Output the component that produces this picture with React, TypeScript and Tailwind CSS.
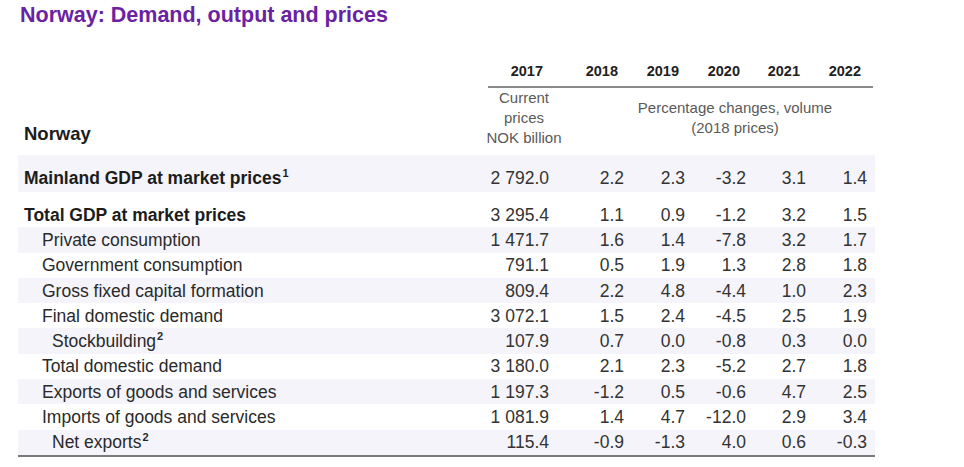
const rows: {
  label: string;
  sup?: string;
  indent: "none" | "one" | "two";
  bold?: boolean;
  shaded?: boolean;
  values: string[];
}[] = [
  { label: "Total GDP at market prices", indent: "none", bold: true, values: ["3 295.4", "1.1", "0.9", "-1.2", "3.2", "1.5"] },
  { label: "Private consumption", indent: "one", shaded: true, values: ["1 471.7", "1.6", "1.4", "-7.8", "3.2", "1.7"] },
  { label: "Government consumption", indent: "one", values: ["791.1", "0.5", "1.9", "1.3", "2.8", "1.8"] },
  { label: "Gross fixed capital formation", indent: "one", shaded: true, values: ["809.4", "2.2", "4.8", "-4.4", "1.0", "2.3"] },
  { label: "Final domestic demand", indent: "one", values: ["3 072.1", "1.5", "2.4", "-4.5", "2.5", "1.9"] },
  { label: "Stockbuilding", sup: "2", indent: "two", shaded: true, values: ["107.9", "0.7", "0.0", "-0.8", "0.3", "0.0"] },
  { label: "Total domestic demand", indent: "one", values: ["3 180.0", "2.1", "2.3", "-5.2", "2.7", "1.8"] },
  { label: "Exports of goods and services", indent: "one", shaded: true, values: ["1 197.3", "-1.2", "0.5", "-0.6", "4.7", "2.5"] },
  { label: "Imports of goods and services", indent: "one", values: ["1 081.9", "1.4", "4.7", "-12.0", "2.9", "3.4"] },
  { label: "Net exports", sup: "2", indent: "two", shaded: true, values: ["115.4", "-0.9", "-1.3", "4.0", "0.6", "-0.3"] },
];

const years = ["2017", "2018", "2019", "2020", "2021", "2022"];

const gridCols = "grid grid-cols-[470px_61px_75px_61px_61px_60px_61px_8px]";

const indentClass = {
  none: "pl-[6px]",
  one: "pl-[24px]",
  two: "pl-[34px]",
};

export default function App() {
  return (
    <div className="w-[964px] h-[467px] bg-white overflow-hidden font-['Liberation_Sans',Arial,sans-serif]">
      <h1 className="pl-[20px] pt-[1px] h-[28px] text-[21.5px] leading-[28px] font-bold text-[#6a22a3]">
        Norway: Demand, output and prices
      </h1>

      <div className="ml-[18px] w-[857px] mt-[32px]">
        {/* year header */}
        <div className={`${gridCols} h-[24px] items-center`}>
          <div />
          {years.map((y) => (
            <div key={y} className="text-right pr-[6px] text-[14.5px] font-bold text-[#222]">
              {y}
            </div>
          ))}
          <div />
        </div>
        <div className="ml-[470px] w-[385px] h-[2px] mt-[2px] bg-[#8a8a8a]" />

        {/* units header */}
        <div className={`${gridCols} h-[60px]`}>
          <div className="pl-[6px] pt-[34px] text-[18.5px] leading-[24px] font-bold text-[#1c1c1c]">Norway</div>
          <div className="-ml-[3px] -mr-[14px] text-center text-[15px] leading-[20px] text-[#5a5a5a]">
            Current
            <br />
            prices
            <br />
            NOK billion
          </div>
          <div className="col-span-5 pl-[54px] pt-[10px] text-center text-[15px] leading-[20px] text-[#5a5a5a]">
            Percentage changes, volume
            <br />
            (2018 prices)
          </div>
          <div />
        </div>

        {/* mainland row */}
        <div className={`${gridCols} mt-[7px] h-[37px] bg-[#f4f4fa] pt-[13px] text-[17.5px] leading-[20px]`}>
          <div className="pl-[6px] font-bold text-[#1c1c1c]">
            Mainland GDP at market prices
            <sup className="text-[11px] font-bold relative -top-[7px] ml-[1px]">1</sup>
          </div>
          {["2 792.0", "2.2", "2.3", "-3.2", "3.1", "1.4"].map((v, i) => (
            <div key={i} className="text-right text-[#333]">
              {v}
            </div>
          ))}
          <div />
        </div>

        {/* body */}
        <div className="mt-[10px] border-b-2 border-[#7a7a7a]">
          {rows.map((r) => (
            <div
              key={r.label}
              className={`${gridCols} h-[25.3px] items-center text-[17.5px] leading-[20px] ${r.shaded ? "bg-[#f4f4fa]" : ""}`}
            >
              <div className={`${indentClass[r.indent]} ${r.bold ? "font-bold text-[#1c1c1c]" : "text-[#2a2a2a]"}`}>
                {r.label}
                {r.sup && <sup className="text-[11px] font-bold relative -top-[7px] ml-[1px]">{r.sup}</sup>}
              </div>
              {r.values.map((v, i) => (
                <div key={i} className="text-right text-[#333]">
                  {v}
                </div>
              ))}
              <div />
            </div>
          ))}
        </div>
      </div>
    </div>
  );
}
